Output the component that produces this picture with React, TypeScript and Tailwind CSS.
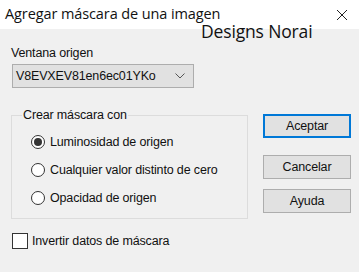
import { useState } from "react";

const options = [
  "Luminosidad de origen",
  "Cualquier valor distinto de cero",
  "Opacidad de origen",
];

function Radio({ checked, label, onClick }: { checked: boolean; label: string; onClick: () => void }) {
  return (
    <button type="button" onClick={onClick} className="flex items-center h-[28px] text-left">
      <span className="w-[14px] h-[14px] rounded-full border border-[#333] bg-white flex items-center justify-center">
        {checked && <span className="w-[8px] h-[8px] rounded-full bg-[#333]" />}
      </span>
      <span className="ml-[5px]">{label}</span>
    </button>
  );
}

function Btn({ label, primary }: { label: string; primary?: boolean }) {
  return (
    <button
      type="button"
      className={
        "w-[88px] h-[24px] bg-[#e1e1e1] flex items-center justify-center " +
        (primary ? "border-2 border-[#0078d7]" : "border border-[#adadad]")
      }
    >
      {label}
    </button>
  );
}

export default function App() {
  const [sel, setSel] = useState(0);
  const [invert, setInvert] = useState(false);

  return (
    <div className="w-[359px] h-[272px] overflow-hidden bg-[#f0f0f0] text-[12.5px] tracking-[-0.15px] text-[#111] font-['Liberation_Sans',Arial,sans-serif] leading-none">
      {/* title bar */}
      <div className="h-[29px] bg-white flex items-center justify-between pl-[5px] pr-[10px]">
        <span className="text-[14.5px] text-[#111] font-['Open_Sans',sans-serif] tracking-[-0.1px]">
          Agregar máscara de una imagen
        </span>
        <svg width="12" height="12" viewBox="0 0 12 12" className="mr-[1px]">
          <path d="M1 1L11 11M11 1L1 11" stroke="#222" strokeWidth="1" fill="none" />
        </svg>
      </div>

      <div className="relative flex">
        <span className="absolute left-[201px] top-[-6px] text-[17.5px] text-[#111] font-['Open_Sans',sans-serif]">
          Designs Norai
        </span>

        <div className="w-[252px] pl-[11px] flex flex-col">
          <div className="mt-[18px] h-[12px]">Ventana origen</div>
          <div className="mt-[5px] ml-[1px] w-[182px] h-[24px] bg-[#e1e1e1] border border-[#adadad] flex items-center justify-between pl-[3px] pr-[8px]">
            <span>V8EVXEV81en6ec01YKo</span>
            <svg width="10" height="6" viewBox="0 0 10 6">
              <path d="M0.5 0.5L5 5L9.5 0.5" stroke="#555" strokeWidth="1" fill="none" />
            </svg>
          </div>

          <div className="relative mt-[27px] w-[237px] h-[104px] border border-[#dcdcdc] pl-[19px] pt-[12px]">
            <span className="absolute left-[10px] top-[-7px] bg-[#f0f0f0] px-[1px]">Crear máscara con</span>
            {options.map((o, i) => (
              <Radio key={o} label={o} checked={sel === i} onClick={() => setSel(i)} />
            ))}
          </div>

          <button type="button" onClick={() => setInvert(!invert)} className="mt-[14px] ml-[1px] flex items-center">
            <span className="w-[16px] h-[16px] border border-[#333] bg-white flex items-center justify-center">
              {invert && (
                <svg width="10" height="8" viewBox="0 0 10 8">
                  <path d="M1 4L4 7L9 1" stroke="#333" strokeWidth="1.5" fill="none" />
                </svg>
              )}
            </span>
            <span className="ml-[4px]">Invertir datos de máscara</span>
          </button>
        </div>

        <div className="pl-[11px] pt-[85px] flex flex-col">
          <Btn label="Aceptar" primary />
          <div className="mt-[17px]">
            <Btn label="Cancelar" />
          </div>
          <div className="mt-[10px]">
            <Btn label="Ayuda" />
          </div>
        </div>
      </div>
    </div>
  );
}
